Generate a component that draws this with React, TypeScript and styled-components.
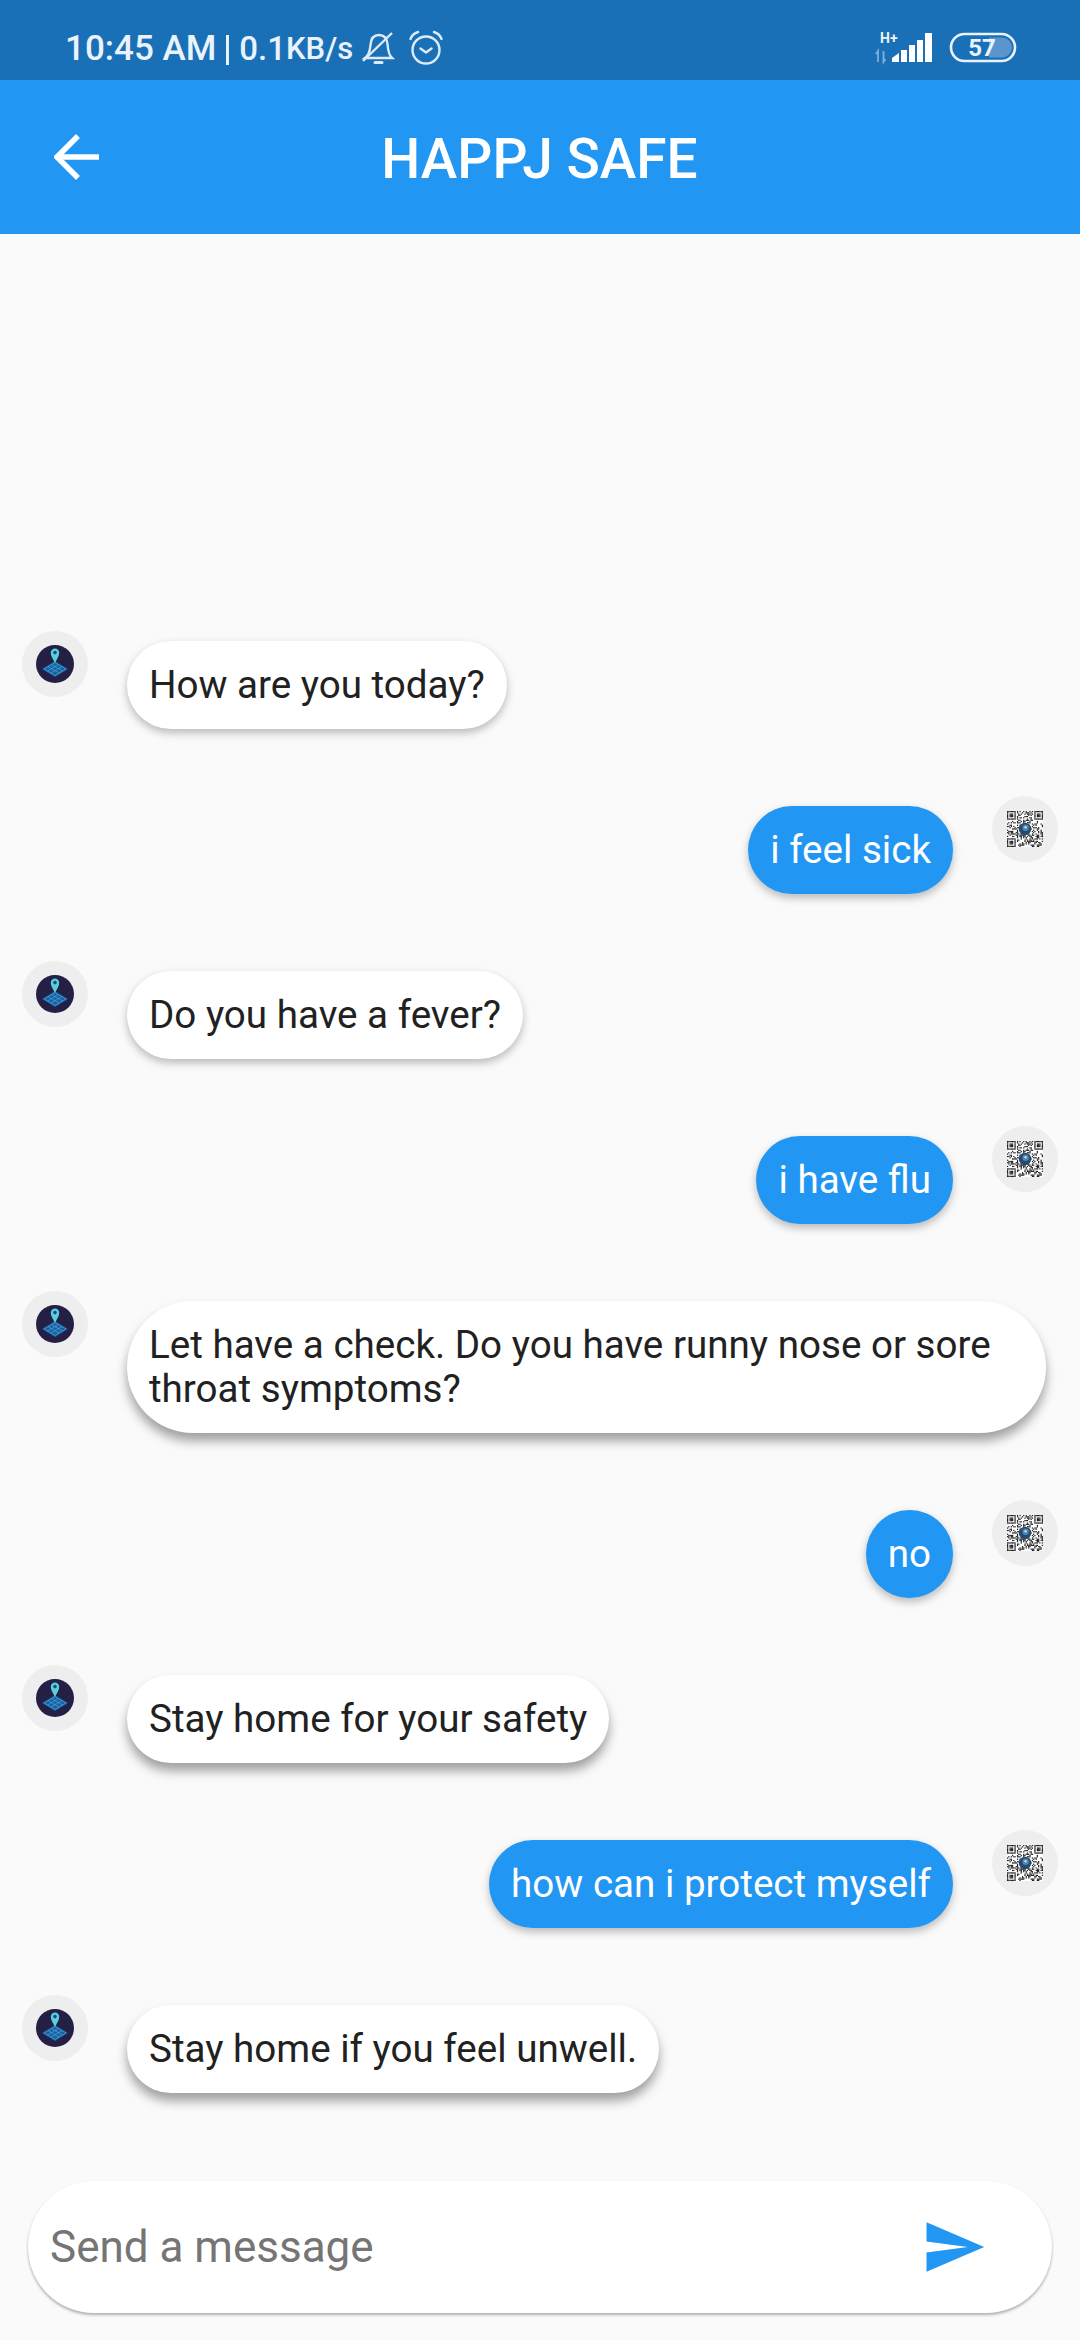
import styled, { createGlobalStyle } from "styled-components";

const GlobalStyle = createGlobalStyle`
  html, body {
    margin: 0;
    padding: 0;
    background: #fafafa;
  }
  * {
    box-sizing: border-box;
  }
`;

const Screen = styled.div`
  width: 1080px;
  height: 2340px;
  display: flex;
  flex-direction: column;
  background: #fafafa;
  font-family: Roboto, "Liberation Sans", sans-serif;
  overflow: hidden;
`;

const StatusBar = styled.div`
  height: 80px;
  flex: none;
  display: flex;
  align-items: center;
  justify-content: space-between;
  padding: 16px 63px 0 65px;
  background: #1a70b7;
  color: #eaf3fb;
`;

const StatusLeft = styled.div`
  display: flex;
  align-items: center;
`;

const StatusRight = styled.div`
  display: flex;
  align-items: center;
  gap: 15px;
`;

const StatusText = styled.span<{ $size: number }>`
  font-size: ${(props) => props.$size}px;
  font-weight: 500;
  white-space: nowrap;
`;

const Divider = styled.span`
  width: 3px;
  height: 30px;
  margin: 4px 10px 0;
  background: #eaf3fb;
`;

const BellIcon = styled.svg`
  display: block;
  margin-left: 8px;
`;

const AlarmIcon = styled.svg`
  display: block;
  margin-left: 14px;
`;

const AppBar = styled.header`
  height: 154px;
  flex: none;
  display: flex;
  align-items: center;
  background: #2196f3;
  color: #ffffff;
  padding-left: 54px;
`;

const BackIcon = styled.svg`
  display: block;
`;

const Title = styled.h1`
  flex: 1;
  margin: 3px 0 0 0;
  text-align: center;
  font-size: 55px;
  font-weight: 500;
  padding-right: 101px;
  white-space: nowrap;
`;

const Messages = styled.main`
  flex: 1;
  display: flex;
  flex-direction: column;
  justify-content: flex-end;
  gap: 67px;
  padding-bottom: 88px;
`;

const Row = styled.div<{ $mine?: boolean }>`
  display: flex;
  flex-direction: ${(props) => (props.$mine ? "row-reverse" : "row")};
  align-items: flex-start;
  padding: 0 22px;
  gap: 39px;
`;

const Avatar = styled.div`
  width: 66px;
  height: 66px;
  flex: none;
  border-radius: 50%;
  background: #eeeeee;
  display: flex;
  align-items: center;
  justify-content: center;
`;

const Bubble = styled.div<{ $mine?: boolean; $raised?: boolean }>`
  margin-top: 10px;
  padding: 22px;
  max-width: 919px;
  min-height: 88px;
  border-radius: 66px;
  font-size: 38.6px;
  line-height: 44px;
  background: ${(props) => (props.$mine ? "#2196f3" : "#ffffff")};
  color: ${(props) => (props.$mine ? "#ffffff" : "#212121")};
  box-shadow: ${(props) =>
    props.$raised
      ? "0 8px 11px rgba(0, 0, 0, 0.36)"
      : "0 4px 8px rgba(0, 0, 0, 0.26)"};
`;

const InputBar = styled.div`
  height: 132px;
  flex: none;
  margin: 0 28px 27px;
  padding: 0 65px 0 22px;
  display: flex;
  align-items: center;
  justify-content: space-between;
  border-radius: 66px;
  background: #ffffff;
  box-shadow: 0 2px 3px rgba(0, 0, 0, 0.3);
`;

const Placeholder = styled.span`
  font-size: 44px;
  color: #757575;
`;

const SendIcon = styled.svg`
  display: block;
  fill: #2196f3;
`;

// 29 module code with the three finder squares, filled from a small hash
const QR_SIZE = 29;

const isFinder = (x: number, y: number) => {
  const left = x < 8;
  const right = x >= QR_SIZE - 8;
  const top = y < 8;
  const bottom = y >= QR_SIZE - 8;
  return (left && top) || (right && top) || (left && bottom);
};

const finderOn = (x: number, y: number) => {
  const fx = x >= QR_SIZE - 8 ? x - (QR_SIZE - 7) : x;
  const fy = y >= QR_SIZE - 8 ? y - (QR_SIZE - 7) : y;
  if (fx < 0 || fx > 6 || fy < 0 || fy > 6) return false;
  if (fx === 0 || fx === 6 || fy === 0 || fy === 6) return true;
  return fx >= 2 && fx <= 4 && fy >= 2 && fy <= 4;
};

const qrCells: { x: number; y: number }[] = [];
for (let y = 0; y < QR_SIZE; y++) {
  for (let x = 0; x < QR_SIZE; x++) {
    const on = isFinder(x, y)
      ? finderOn(x, y)
      : ((x * 7 + y * 13 + x * y * 5) ^ (x * y)) % 5 < 2;
    if (on) qrCells.push({ x, y });
  }
}

const QrAvatar = () => (
  <svg width="36" height="36" viewBox="0 0 29 29">
    <rect width="29" height="29" fill="#ffffff" />
    {qrCells.map((cell) => (
      <rect key={`${cell.x}-${cell.y}`} x={cell.x} y={cell.y} width="1" height="1" fill="#1c1c1c" />
    ))}
    <circle cx="14.5" cy="14.5" r="5" fill="#27496f" />
    <circle cx="15" cy="13.5" r="2.6" fill="#4f86b5" />
    <circle cx="15" cy="13" r="1" fill="#b9d8ee" />
  </svg>
);

const LogoAvatar = () => (
  <svg width="38" height="38" viewBox="0 0 38 38">
    <circle cx="19" cy="19" r="19" fill="#241f45" />
    <path d="M6 24 L19 16 L32 24 L19 32 Z" fill="#1c5f9e" />
    <path
      d="M8 24 L19 17.5 L30 24 L19 30.5 Z M12 21.5 L23 28 M15.5 19.5 L26.5 26 M26 21.5 L15 28 M22.5 19.5 L11.5 26"
      fill="none"
      stroke="#3fa9e0"
      strokeWidth="0.7"
    />
    <path d="M19 18 C16.5 13.5 14.8 11 14.8 7.6 A4.2 4.2 0 0 1 23.2 7.6 C23.2 11 21.5 13.5 19 18 Z" fill="#58cfdc" />
    <circle cx="19" cy="7.6" r="1.8" fill="#1f4a70" />
  </svg>
);

type Message = {
  id: number;
  text: string;
  mine?: boolean;
  raised?: boolean;
};

const messages: Message[] = [
  { id: 1, text: "How are you today?" },
  { id: 2, text: "i feel sick", mine: true },
  { id: 3, text: "Do you have a fever?" },
  { id: 4, text: "i have flu", mine: true },
  { id: 5, text: "Let have a check. Do you have runny nose or sore throat symptoms?", raised: true },
  { id: 6, text: "no", mine: true },
  { id: 7, text: "Stay home for your safety", raised: true },
  { id: 8, text: "how can i protect myself", mine: true },
  { id: 9, text: "Stay home if you feel unwell.", raised: true },
];

const App = () => {
  return (
    <>
      <GlobalStyle />
      <Screen>
        <StatusBar>
          <StatusLeft>
            <StatusText $size={35}>10:45 AM</StatusText>
            <Divider />
            <StatusText $size={33}>0.1</StatusText>
            <StatusText $size={31}>KB/s</StatusText>
            <BellIcon width="34" height="34" viewBox="0 0 34 34" fill="none" stroke="#dcebf8" strokeWidth="2.4">
              <path d="M4 27 C8 24 9 20 9.5 14 C10 7 13.5 4 18 4 C23 4 26 7.5 26.5 13 C27 19 27.5 24 31 27 Z" />
              <path d="M14 31.5 H21" strokeWidth="3" strokeLinecap="round" />
              <path d="M2 30 L31 2" />
            </BellIcon>
            <AlarmIcon width="34" height="36" viewBox="0 0 34 36" fill="none" stroke="#dcebf8" strokeWidth="2.4">
              <circle cx="17" cy="20" r="13.5" />
              <path d="M11.5 18.5 L17 22.5 L22.5 18.5" strokeLinecap="round" strokeLinejoin="round" />
              <path d="M1.5 9 C3 5 5.5 3 9 2" strokeLinecap="round" />
              <path d="M32.5 9 C31 5 28.5 3 25 2" strokeLinecap="round" />
            </AlarmIcon>
          </StatusLeft>
          <StatusRight>
            <svg width="60" height="38" viewBox="0 -3 60 38">
              <text x="6" y="11" fontFamily="Roboto, sans-serif" fontSize="14" fontWeight="700" fill="#eaf3fb">H+</text>
              <path d="M2 22 L4 19 L4 30 M9.5 19 V30 L11.5 27" stroke="#7fb0d9" strokeWidth="1.8" fill="none" />
              <path d="M18 30 V26 L25 21 V30 Z" fill="#ffffff" />
              <rect x="27" y="18" width="6" height="12" fill="#ffffff" />
              <rect x="35" y="13" width="6" height="17" fill="#ffffff" />
              <rect x="43" y="8" width="6" height="22" fill="#ffffff" />
              <rect x="51" y="1" width="7" height="29" fill="#ffffff" />
            </svg>
            <svg width="68" height="32" viewBox="0 0 68 32">
              <rect x="2" y="2" width="64" height="27" rx="13.5" fill="none" stroke="#eaf3fb" strokeWidth="2.6" />
              <path d="M40 5.5 H53 A10 10 0 0 1 53 25.5 H40 Z" fill="#5a96cd" />
              <text x="33" y="24" textAnchor="middle" fontFamily="Roboto, sans-serif" fontSize="24" fontWeight="700" fill="#eaf3fb">57</text>
            </svg>
          </StatusRight>
        </StatusBar>

        <AppBar>
          <BackIcon width="46" height="46" viewBox="0 0 46 46" fill="none" stroke="#ffffff" strokeWidth="5.5">
            <path d="M45 23 H4" />
            <path d="M24 2 L3 23 L24 44" />
          </BackIcon>
          <Title>HAPPJ SAFE</Title>
        </AppBar>

        <Messages>
          {messages.map((message) => (
            <Row key={message.id} $mine={message.mine}>
              <Avatar>{message.mine ? <QrAvatar /> : <LogoAvatar />}</Avatar>
              <Bubble $mine={message.mine} $raised={message.raised}>
                {message.text}
              </Bubble>
            </Row>
          ))}
        </Messages>

        <InputBar>
          <Placeholder>Send a message</Placeholder>
          <SendIcon width="66" height="66" viewBox="0 0 24 24">
            <path d="M2.01 21L23 12 2.01 3 2 10l15 2-15 2z" />
          </SendIcon>
        </InputBar>
      </Screen>
    </>
  );
};

export default App;
